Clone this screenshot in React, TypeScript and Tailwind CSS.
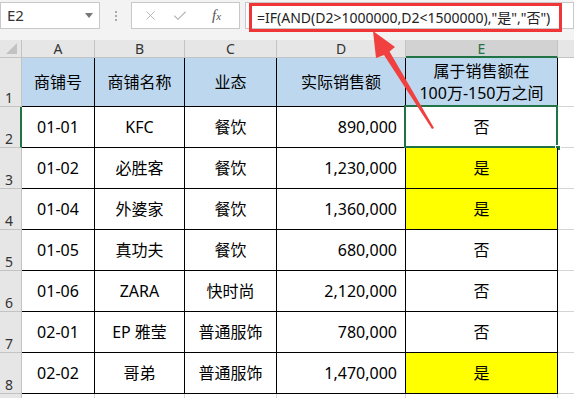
import { Check, X } from "lucide-react";

const colWidths = ["w-[73px]", "w-[90px]", "w-[92px]", "w-[129px]", "w-[152px]"];

const rows = [
  ["01-01", "KFC", "餐饮", "890,000", "否"],
  ["01-02", "必胜客", "餐饮", "1,230,000", "是"],
  ["01-04", "外婆家", "餐饮", "1,360,000", "是"],
  ["01-05", "真功夫", "餐饮", "680,000", "否"],
  ["01-06", "ZARA", "快时尚", "2,120,000", "否"],
  ["02-01", "EP 雅莹", "普通服饰", "780,000", "否"],
  ["02-02", "哥弟", "普通服饰", "1,470,000", "是"],
];

function RowHeader({ n, h, selected }: { n: string; h: string; selected?: boolean }) {
  return (
    <div
      className={`${h} w-[22px] shrink-0 flex items-end pl-[5px] pb-[1px] bg-[#e6e6e6] border-b border-[#c3c3c3] text-[14px] leading-none text-[#333] ${
        selected ? "border-r-2 border-r-[#217346]" : "border-r border-r-[#c3c3c3]"
      }`}
    >
      {n}
    </div>
  );
}

function FormulaBar() {
  return (
    <div className="relative h-[40px] bg-[#f3f3f3] flex items-start pt-[2px]">
      <div className="w-[100px] h-[27px] bg-white border border-[#c8c8c8] flex items-center justify-between pl-[6px] pr-[6px]">
        <span className="text-[15px] text-[#333]">E2</span>
        <span className="w-0 h-0 border-l-[4px] border-r-[4px] border-t-[5px] border-l-transparent border-r-transparent border-t-[#777]" />
      </div>
      <div className="w-[31px] h-[27px] flex flex-col items-center justify-center gap-[2px]">
        <span className="w-[2px] h-[2px] bg-[#aaa]" />
        <span className="w-[2px] h-[2px] bg-[#aaa]" />
        <span className="w-[2px] h-[2px] bg-[#aaa]" />
      </div>
      <div className="w-[109px] h-[27px] bg-white border border-[#c8c8c8] flex items-center pl-[11px]">
        <X size={15} strokeWidth={1.3} className="text-[#a8a8a8]" />
        <Check size={16} strokeWidth={1.6} className="ml-[14px] text-[#b4b4b4]" />
        <span className="ml-[24px] font-['Liberation_Serif',serif] italic text-[15px] text-[#555] leading-none">
          f<span className="text-[11px]">x</span>
        </span>
      </div>
      <div className="ml-[5px] flex-1 h-[27px] bg-white border border-[#c8c8c8]" />
      <div className="absolute left-[249px] top-[3px] w-[313px] h-[29px] border-[3px] border-[#ef3535] flex items-center pl-[5px] text-[14px] text-[#222] whitespace-nowrap">
        =IF(AND(D2&gt;1000000,D2&lt;1500000),"是","否")
      </div>
    </div>
  );
}

function ColumnHeaders() {
  const letters = ["A", "B", "C", "D", "E"];
  return (
    <div className="flex h-[18px]">
      <div className="relative w-[22px] shrink-0 bg-[#e6e6e6] border-r border-b border-[#c3c3c3]">
        <div className="absolute right-[4px] bottom-[3px] w-0 h-0 border-b-[11px] border-l-[11px] border-b-[#c2c2c2] border-l-transparent" />
      </div>
      {letters.map((l, i) =>
        l === "E" ? (
          <div
            key={l}
            className={`${colWidths[i]} shrink-0 flex items-center justify-center bg-[#d2d2d2] border-r border-[#c3c3c3] border-b-2 border-b-[#217346] text-[14px] text-[#217346]`}
          >
            {l}
          </div>
        ) : (
          <div
            key={l}
            className={`${colWidths[i]} shrink-0 flex items-center justify-center bg-[#e6e6e6] border-r border-b border-[#c3c3c3] text-[14px] text-[#333]`}
          >
            {l}
          </div>
        ),
      )}
      <div className="flex-1 bg-[#e6e6e6] border-b border-[#c3c3c3]" />
    </div>
  );
}

function HeaderRow() {
  const cell = "shrink-0 h-[49px] flex items-center justify-center bg-[#bdd7ee] border-r border-b border-black text-[16px] text-black";
  return (
    <div className="flex">
      <RowHeader n="1" h="h-[49px]" />
      <div className={`${colWidths[0]} ${cell}`}>商铺号</div>
      <div className={`${colWidths[1]} ${cell}`}>商铺名称</div>
      <div className={`${colWidths[2]} ${cell}`}>业态</div>
      <div className={`${colWidths[3]} ${cell}`}>实际销售额</div>
      <div className={`${colWidths[4]} ${cell} flex-col leading-[22px]`}>
        <span>属于销售额在</span>
        <span>100万-150万之间</span>
      </div>
      <div className="flex-1 h-[49px] border-b border-[#d4d4d4]" />
    </div>
  );
}

function DataRow({ r, idx }: { r: string[]; idx: number }) {
  const cell = "shrink-0 h-[41px] flex items-center border-r border-b border-black text-[16px] text-black";
  const yes = r[4] === "是";
  const selected = idx === 0;
  return (
    <div className="flex">
      <RowHeader n={String(idx + 2)} h="h-[41px]" selected={selected} />
      <div className={`${colWidths[0]} ${cell} justify-center`}>{r[0]}</div>
      <div className={`${colWidths[1]} ${cell} justify-center`}>{r[1]}</div>
      <div className={`${colWidths[2]} ${cell} justify-center`}>{r[2]}</div>
      <div className={`${colWidths[3]} ${cell} justify-end pr-[8px]`}>{r[3]}</div>
      <div className={`${colWidths[4]} ${cell} justify-center relative ${yes ? "bg-[#ffff00]" : "bg-white"}`}>
        {r[4]}
        {selected ? (
          <>
            <div className="absolute -left-[2px] -top-[2px] -right-[1px] -bottom-[1px] border-2 border-[#217346]" />
            <div className="absolute -right-[4px] -bottom-[4px] w-[6px] h-[6px] bg-[#217346] border border-white" />
          </>
        ) : null}
      </div>
      <div className="flex-1 h-[41px] border-b border-[#d4d4d4]" />
    </div>
  );
}

export default function App() {
  return (
    <div className="relative w-[574px] h-[398px] overflow-hidden bg-white font-['Noto_Sans','Noto_Sans_CJK_SC',sans-serif]">
      <FormulaBar />
      <ColumnHeaders />
      <HeaderRow />
      {rows.map((r, i) => (
        <DataRow key={r[0]} r={r} idx={i} />
      ))}
      <div className="flex h-[10px]">
        <div className="w-[22px] shrink-0 bg-[#e6e6e6] border-r border-[#c3c3c3]" />
        {colWidths.map((w) => (
          <div key={w} className={`${w} shrink-0 border-r border-[#d4d4d4]`} />
        ))}
      </div>
      <svg className="absolute left-0 top-0 pointer-events-none" width="574" height="398" viewBox="0 0 574 398">
        <polygon
          points="373,31 395,47 389.5,51.5 434,128 432,129 384,55 376,58"
          fill="#f04040"
        />
      </svg>
    </div>
  );
}
